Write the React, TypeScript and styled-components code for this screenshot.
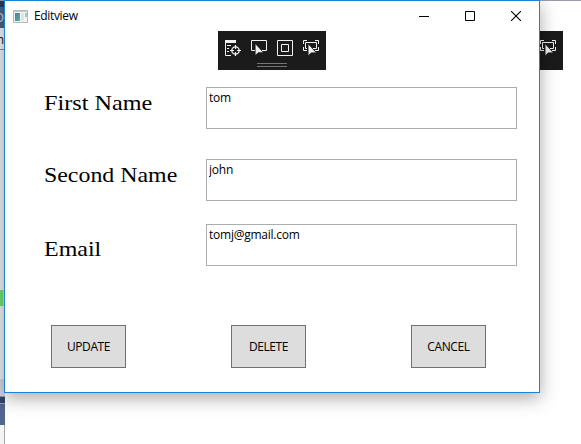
import React from "react";
import styled, { createGlobalStyle } from "styled-components";

const GlobalStyle = createGlobalStyle`
  * { box-sizing: border-box; }
  body { margin: 0; overflow: hidden; background: #fff; }
`;

const Desktop = styled.div`
  position: relative;
  display: flex;
  width: 581px;
  height: 444px;
  overflow: hidden;
  background: #fff;
  font-family: "Open Sans", "Noto Sans", sans-serif;
  font-size: 12px;
  color: #000;
`;

const Strip = styled.div`
  display: flex;
  flex-direction: column;
  flex: none;
  width: 5px;
  overflow: hidden;
`;

const Band = styled.div<{ $h: number; $bg: string }>`
  flex: none;
  height: ${(p) => p.$h}px;
  background: ${(p) => p.$bg};
`;

const TextBand = styled(Band)<{ $ink: string; $drop?: number }>`
  display: flex;
  align-items: center;
  justify-content: flex-end;
  padding: ${(p) => p.$drop ?? 0}px 1px 0 0;
  overflow: hidden;
  color: ${(p) => p.$ink};
  line-height: 18px;
`;

const MarkerBand = styled(Band)`
  border-right: 2px solid #d8d8d8;
`;

const LightBand = styled(Band)`
  border-right: 1px solid #a6a6a6;
`;

const Backdrop = styled.div`
  flex: 1;
  display: flex;
  justify-content: flex-end;
  align-items: flex-start;
  border-top: 1px solid #9a9aaa;
  padding: 30px 18px 0 0;
`;

const Toolbar = styled.div`
  display: flex;
  flex-direction: column;
  align-items: center;
  width: 108px;
  height: 39px;
  padding-top: 8px;
  background: #1b1b1c;
`;

const ToolRow = styled.div`
  display: flex;
  gap: 8px;
  padding-right: 1px;
`;

const Grip = styled.div`
  width: 30px;
  height: 4px;
  margin-top: 6px;
  border: solid #747475;
  border-width: 1px 0;
`;

const Window = styled.section`
  position: absolute;
  left: 4px;
  top: 0;
  width: 536px;
  height: 393px;
  display: flex;
  flex-direction: column;
  border: 1px solid #1883d7;
  background: #fff;
  box-shadow: 0 5px 17px rgba(0, 0, 0, 0.34);
`;

const TitleBar = styled.header`
  display: flex;
  align-items: center;
  height: 30px;
  flex: none;
  padding-left: 8px;
`;

const Title = styled.span`
  flex: 1;
  margin-left: 6px;
  font-size: 12px;
  line-height: 16px;
  letter-spacing: -0.34px;
`;

const Caption = styled.button`
  display: flex;
  align-items: center;
  justify-content: center;
  width: 46px;
  height: 29px;
  padding: 0;
  border: 0;
  background: transparent;
`;

const ToolDock = styled.div`
  padding-left: 213px;
  height: 39px;
`;

const Form = styled.div`
  display: grid;
  grid-template-columns: 162px 311px;
  grid-template-rows: 72px 65px 42px;
  padding: 17px 0 0 39px;
`;

const Label = styled.label<{ $top: number; $scale: number }>`
  justify-self: start;
  margin-top: ${(p) => p.$top}px;
  font-family: "Liberation Serif", serif;
  font-size: 22px;
  line-height: 24px;
  white-space: nowrap;
  transform: scaleX(${(p) => p.$scale});
  transform-origin: left;
`;

const Field = styled.input`
  width: 311px;
  height: 42px;
  padding: 0 2px 21px;
  border: 1px solid #abadb3;
  border-radius: 0;
  outline: 0;
  background: #fff;
  color: #000;
  font: 12px/18px "Open Sans", "Noto Sans", sans-serif;
  letter-spacing: -0.24px;
`;

const Actions = styled.div`
  display: flex;
  gap: 105px;
  padding: 59px 0 0 46px;
`;

const Action = styled.button`
  width: 75px;
  height: 43px;
  padding: 0;
  border: 1px solid #707070;
  border-radius: 0;
  background: #ddd;
  color: #000;
  font: 12px/16px "Open Sans", "Noto Sans", sans-serif;
  letter-spacing: -0.4px;
`;

const Cursor = ({ x, y }: { x: number; y: number }) => (
  <path
    transform={`translate(${x} ${y})`}
    d="M0 0V11.5L3 8.7H8Z"
    fill="#f1f1f1"
    stroke="#1b1b1c"
    strokeWidth=".5"
  />
);

const TreeIcon = () => (
  <svg width="18" height="18" fill="none" stroke="#f1f1f1">
    <path d="M1 1h11v3H1z" fill="#f1f1f1" stroke="none" />
    <path d="M1.5 2v14.5H7M3 6.5h4M3 9.5h2M3 12.5h2" />
    <circle cx="11.5" cy="11.5" r="3.7" strokeWidth="1.3" />
    <path d="M11.5 6v4M11.5 13v4M6 11.5h4M13 11.5h4" strokeWidth="1.2" />
  </svg>
);

const SelectIcon = () => (
  <svg width="18" height="18" fill="none" stroke="#f1f1f1">
    <path d="M5 11.5H1.5v-10h15v10H12" />
    <Cursor x={5.3} y={4.8} />
  </svg>
);

const BoundsIcon = () => (
  <svg width="18" height="18" fill="none" stroke="#f1f1f1">
    <path d="M1.5 1.5h15v15h-15zM5.5 5.5h7v7h-7z" />
  </svg>
);

const FocusIcon = () => (
  <svg width="18" height="18" fill="none" stroke="#f1f1f1">
    <path d="M1.5 5V1.5H5M13 1.5h3.500V5M1.500 8v3.500H5M13 11.500h3.500V8M5 9.500H3.500v-6h11v6H11" />
    <Cursor x={6.2} y={5} />
  </svg>
);

const DebugToolbar = () => (
  <Toolbar>
    <ToolRow>
      <TreeIcon />
      <SelectIcon />
      <BoundsIcon />
      <FocusIcon />
    </ToolRow>
    <Grip />
  </Toolbar>
);

const AppIcon = () => (
  <svg width="15" height="13">
    <defs>
      <linearGradient id="pane" x1="0" y1="0" x2="1" y2="1">
        <stop offset="0" stopColor="#4b78a8" />
        <stop offset="1" stopColor="#57b98a" />
      </linearGradient>
    </defs>
    <path d="M.5.5h14v12H.5z" fill="#f2f3f4" stroke="#b5b8bb" />
    <path d="M1 1h13v1H1z" fill="#c5c9cc" />
    <path d="M2 3h5v8H2z" fill="url(#pane)" />
    <path d="M8 3h3v8H8z" fill="#dfe3e5" />
    <path d="M12 3h2v4h-2z" fill="#9bcdb8" />
  </svg>
);

const fields = [
  { id: "first", label: "First Name", value: "tom", top: 4, scale: 1.1 },
  { id: "second", label: "Second Name", value: "john", top: 4, scale: 1.085 },
  { id: "email", label: "Email", value: "tomj@gmail.com", top: 13, scale: 1.09 },
];

export default function App() {
  return (
    <>
      <GlobalStyle />
      <Desktop>
        <Strip>
          <Band $h={1} $bg="#8e92a2" />
          <Band $h={6} $bg="#293955" />
          <TextBand $h={21} $bg="#4d6185" $ink="#d5dbe6">D</TextBand>
          <TextBand $h={21} $bg="#f4f4f6" $ink="#111" $drop={3}>n</TextBand>
          <Band $h={1} $bg="#8b90a0" />
          <Band $h={240} $bg="#f0f0f0" />
          <MarkerBand $h={16} $bg="#72e070" />
          <Band $h={73} $bg="#f0f0f0" />
          <Band $h={17} $bg="#d8d8dc" />
          <Band $h={1} $bg="#8f9bbd" />
          <Band $h={6} $bg="#34456c" />
          <Band $h={1} $bg="#8f9bbd" />
          <Band $h={21} $bg="#51668e" />
          <LightBand $h={19} $bg="#f4f4f4" />
        </Strip>
        <Backdrop>
          <DebugToolbar />
        </Backdrop>
        <Window>
          <TitleBar>
            <AppIcon />
            <Title>Editview</Title>
            <Caption aria-label="Minimize">
              <svg width="10" height="10" stroke="#000"><path d="M0 5.500h10" /></svg>
            </Caption>
            <Caption aria-label="Maximize">
              <svg width="10" height="10" fill="none" stroke="#000"><path d="M.5.5h9v9h-9z" /></svg>
            </Caption>
            <Caption aria-label="Close">
              <svg width="10" height="10" stroke="#000" strokeWidth="1.100"><path d="M0 0l10 10M10 0L0 10" /></svg>
            </Caption>
          </TitleBar>
          <ToolDock>
            <DebugToolbar />
          </ToolDock>
          <Form>
            {fields.map((f) => (
              <React.Fragment key={f.id}>
                <Label htmlFor={f.id} $top={f.top} $scale={f.scale}>{f.label}</Label>
                <Field id={f.id} defaultValue={f.value} />
              </React.Fragment>
            ))}
          </Form>
          <Actions>
            <Action>UPDATE</Action>
            <Action>DELETE</Action>
            <Action>CANCEL</Action>
          </Actions>
        </Window>
      </Desktop>
    </>
  );
}
